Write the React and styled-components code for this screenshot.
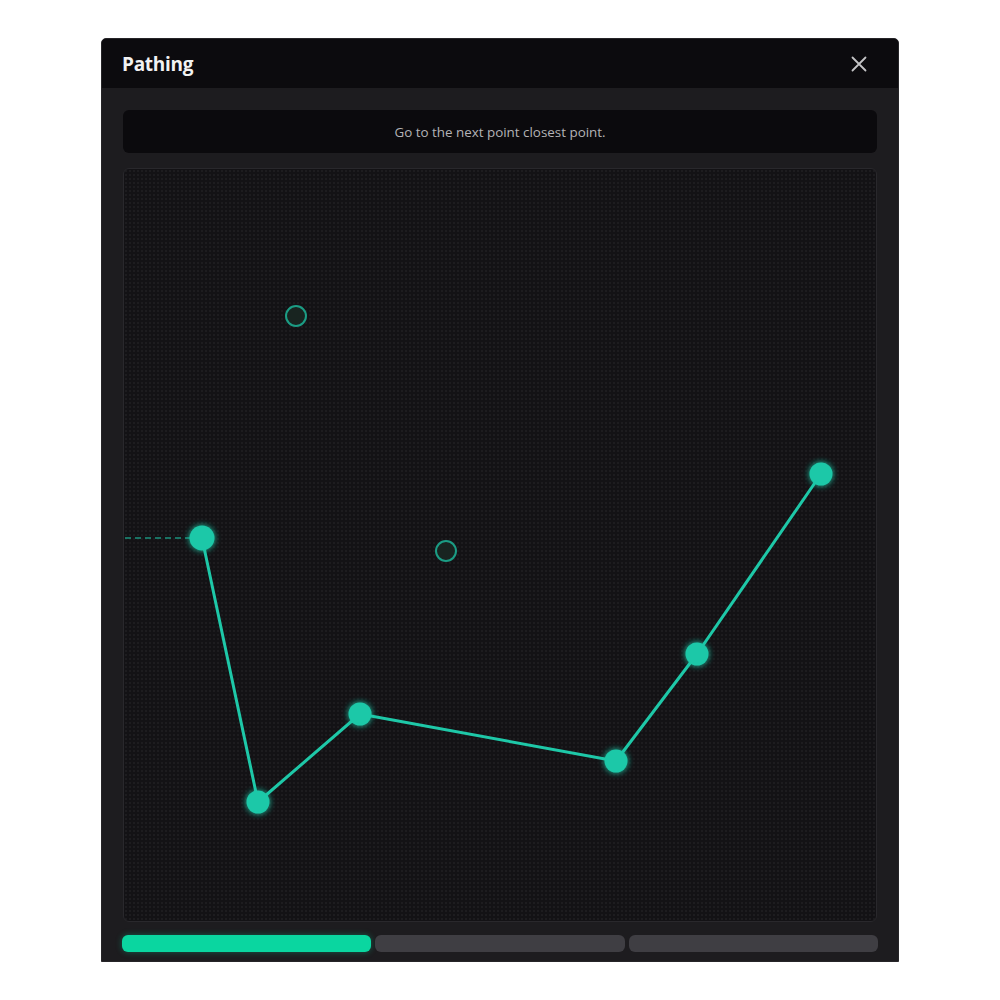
import React from 'react';
import styled, { createGlobalStyle } from 'styled-components';

const GlobalStyle = createGlobalStyle`
    html, body {
        margin: 0;
        padding: 0;
        background: #ffffff;
    }
    body {
        font-family: "Open Sans", "Noto Sans", "Liberation Sans", sans-serif;
    }
`;

const Page = styled.div`
    width: 1000px;
    height: 1000px;
    padding: 38px 0 0 101px;
    box-sizing: border-box;
`;

const Modal = styled.div`
    width: 798px;
    height: 924px;
    box-sizing: border-box;
    background-color: #1d1c1f;
    border: 1px solid #262528;
    border-radius: 5px 5px 0 0;
    display: flex;
    flex-direction: column;
    overflow: hidden;
`;

const Header = styled.header`
    height: 49px;
    flex-shrink: 0;
    background-color: #0c0b0e;
    display: flex;
    align-items: center;
    justify-content: space-between;
    padding: 0 29px 0 20px;
`;

const Title = styled.h2`
    margin: 0;
    color: #f2f2f2;
    font-size: 19px;
    font-weight: 700;
    letter-spacing: -0.3px;
`;

const CloseButton = styled.button`
    border: none;
    background: none;
    padding: 0;
    width: 20px;
    height: 20px;
    display: flex;
    align-items: center;
    justify-content: center;
    cursor: pointer;
    color: #c4c4c6;
`;

const Body = styled.div`
    flex: 1;
    display: flex;
    flex-direction: column;
    padding: 22px 20px 9px 20px;
`;

const Instruction = styled.div`
    height: 43px;
    margin: 0 1px;
    flex-shrink: 0;
    border-radius: 6px;
    background-color: #0b0a0d;
    color: #b4b3b6;
    font-size: 13.4px;
    display: flex;
    align-items: center;
    justify-content: center;
`;

const Canvas = styled.div`
    position: relative;
    margin: 15px 1px 0;
    width: 754px;
    height: 754px;
    box-sizing: border-box;
    border: 1px solid #29282c;
    border-radius: 6px;
    background-color: #131215;
    background-image: radial-gradient(circle, rgba(255, 255, 255, 0.045) 1px, transparent 1px);
    background-size: 4px 4px;
    overflow: hidden;
`;

const Progress = styled.div`
    margin-top: 13px;
    display: grid;
    grid-template-columns: repeat(3, 1fr);
    gap: 4px;
`;

const Segment = styled.div`
    height: 17px;
    border-radius: 6px;
    background-color: ${props => props.done ? '#0ad6a0' : '#3f3e43'};
    box-shadow: ${props => props.done ? '0 0 6px rgba(10, 214, 160, 0.35)' : 'none'};
`;

const path = [
    [79, 370],
    [135, 634],
    [237, 546],
    [493, 593],
    [574, 486],
    [698, 306],
];

const pending = [
    [173, 148],
    [323, 383],
];

const TEAL = '#1ec8a8';

const PathChart = () => (
    <svg width="752" height="752" viewBox="1 1 752 752" style={{ display: 'block' }}>
        <defs>
            <filter id="glow" x="-50%" y="-50%" width="200%" height="200%">
                <feGaussianBlur stdDeviation="3" result="blur" />
                <feMerge>
                    <feMergeNode in="blur" />
                    <feMergeNode in="SourceGraphic" />
                </feMerge>
            </filter>
        </defs>
        <line x1="2" y1="370" x2="68" y2="370" stroke={TEAL} strokeOpacity="0.7" strokeWidth="1.5" strokeDasharray="6 4" />
        <polyline
            points={path.map(p => p.join(',')).join(' ')}
            fill="none"
            stroke={TEAL}
            strokeWidth="3"
            strokeLinejoin="round"
        />
        {pending.map(([x, y]) => (
            <circle key={`${x}-${y}`} cx={x} cy={y} r="10" fill="#182420" stroke={TEAL} strokeOpacity="0.75" strokeWidth="2" />
        ))}
        {path.map(([x, y], i) => (
            <circle key={`${x}-${y}`} cx={x} cy={y} r={i === 0 ? 12.5 : 11.5} fill={TEAL} filter="url(#glow)" />
        ))}
    </svg>
);

export default function App() {
    return (
        <>
            <GlobalStyle />
            <Page>
                <Modal>
                    <Header>
                        <Title>Pathing</Title>
                        <CloseButton aria-label="Close">
                            <svg width="16" height="16" viewBox="0 0 16 16">
                                <path d="M1.5 1.5 L14.5 14.5 M14.5 1.5 L1.5 14.5" stroke="currentColor" strokeWidth="1.8" strokeLinecap="round" />
                            </svg>
                        </CloseButton>
                    </Header>
                    <Body>
                        <Instruction>Go to the next point closest point.</Instruction>
                        <Canvas>
                            <PathChart />
                        </Canvas>
                        <Progress>
                            <Segment done />
                            <Segment />
                            <Segment />
                        </Progress>
                    </Body>
                </Modal>
            </Page>
        </>
    );
}
